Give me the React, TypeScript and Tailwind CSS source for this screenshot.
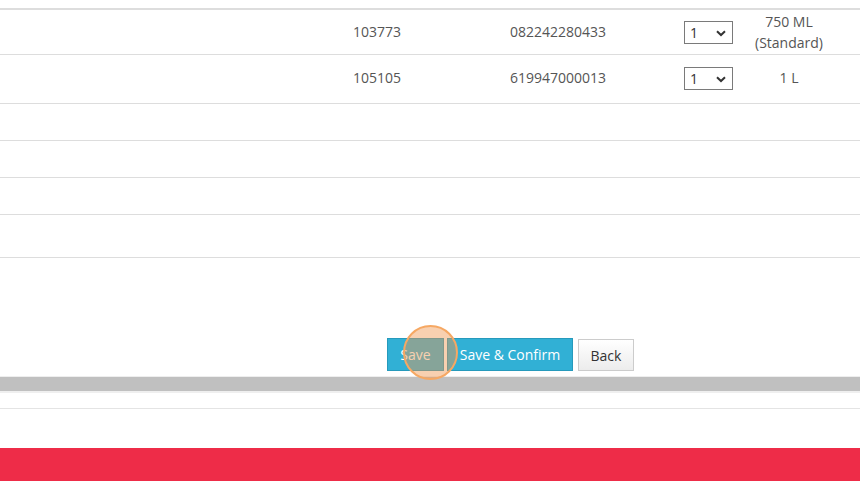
import React from 'react';

interface Item {
  code: string;
  barcode: string;
  qty: string;
  size: string[];
  height: string;
}

const items: Item[] = [
  { code: '103773', barcode: '082242280433', qty: '1', size: ['750 ML', '(Standard)'], height: 'h-[45px] pb-[1px]' },
  { code: '105105', barcode: '619947000013', qty: '1', size: ['1 L'], height: 'h-[49px] pb-[4px]' },
];

const QtySelect: React.FC<{ value: string }> = ({ value }) => (
  <div className="relative w-[49px] h-[23px] border border-[#7a7a7a] bg-white flex items-center pl-[5px] text-[14px] text-[#333]">
    <span>{value}</span>
    <svg className="absolute right-[6px] top-[8px]" width="10" height="7" viewBox="0 0 10 7">
      <path d="M1 1.2 L5 5 L9 1.2" fill="none" stroke="#333" strokeWidth="2" />
    </svg>
  </div>
);

const App: React.FC = () => {
  return (
    <div className="w-[860px] h-[481px] bg-white overflow-hidden flex flex-col text-[14px] text-[#555]" style={{ fontFamily: '"Open Sans", "Liberation Sans", sans-serif' }}>
      <div className="shrink-0 h-[8px] border-b-2 border-[#dddddd] box-content" />

      {items.map((item) => (
        <div key={item.code} className={`shrink-0 flex items-center border-b border-[#dddddd] box-border ${item.height}`}>
          <div className="w-[330px]" />
          <div className="w-[94px] text-center">{item.code}</div>
          <div className="w-[256px] pl-[12px] text-center">{item.barcode}</div>
          <div className="w-[60px] pl-[4px] pt-[2px]">
            <QtySelect value={item.qty} />
          </div>
          <div className="w-[98px] text-center leading-[21px]">
            {item.size.map((s) => (
              <div key={s}>{s}</div>
            ))}
          </div>
        </div>
      ))}

      <div className="shrink-0 h-[36px] border-b border-[#dddddd] box-content" />
      <div className="shrink-0 h-[36px] border-b border-[#dddddd] box-content" />
      <div className="shrink-0 h-[36px] border-b border-[#dddddd] box-content" />
      <div className="shrink-0 h-[42px] border-b border-[#dddddd] box-content" />

      <div className="shrink-0 h-[118px] pt-[80px] pl-[387px] flex items-start">
        <div className="relative flex items-start">
          <button className="w-[57px] h-[33px] bg-[#31b0d5] border border-[#269abc] text-white text-[14px]">Save</button>
          <button className="ml-[3px] w-[126px] h-[33px] bg-[#31b0d5] border border-[#269abc] text-white text-[14px]">Save &amp; Confirm</button>
          <button className="ml-[5px] mt-[1px] w-[56px] h-[32px] bg-gradient-to-b from-white to-[#ececec] border border-[#cccccc] text-[#333] text-[14px]">Back</button>
          <div className="absolute left-[16px] -top-[13px] w-[55px] h-[55px] rounded-full border-2 border-[#f6a863] bg-[rgba(240,150,80,0.45)]" />
        </div>
      </div>

      <div className="shrink-0 h-[1px] bg-[#eeeeee]" />
      <div className="shrink-0 h-[14px] bg-[#c0c0c0]" />
      <div className="shrink-0 h-[2px] bg-[#efefef]" />
      <div className="shrink-0 h-[15px] border-b border-[#e4e4e4] box-content" />
      <div className="shrink-0 h-[39px]" />
      <div className="flex-1 bg-[#ee2c48]" />
    </div>
  );
};

export default App;
